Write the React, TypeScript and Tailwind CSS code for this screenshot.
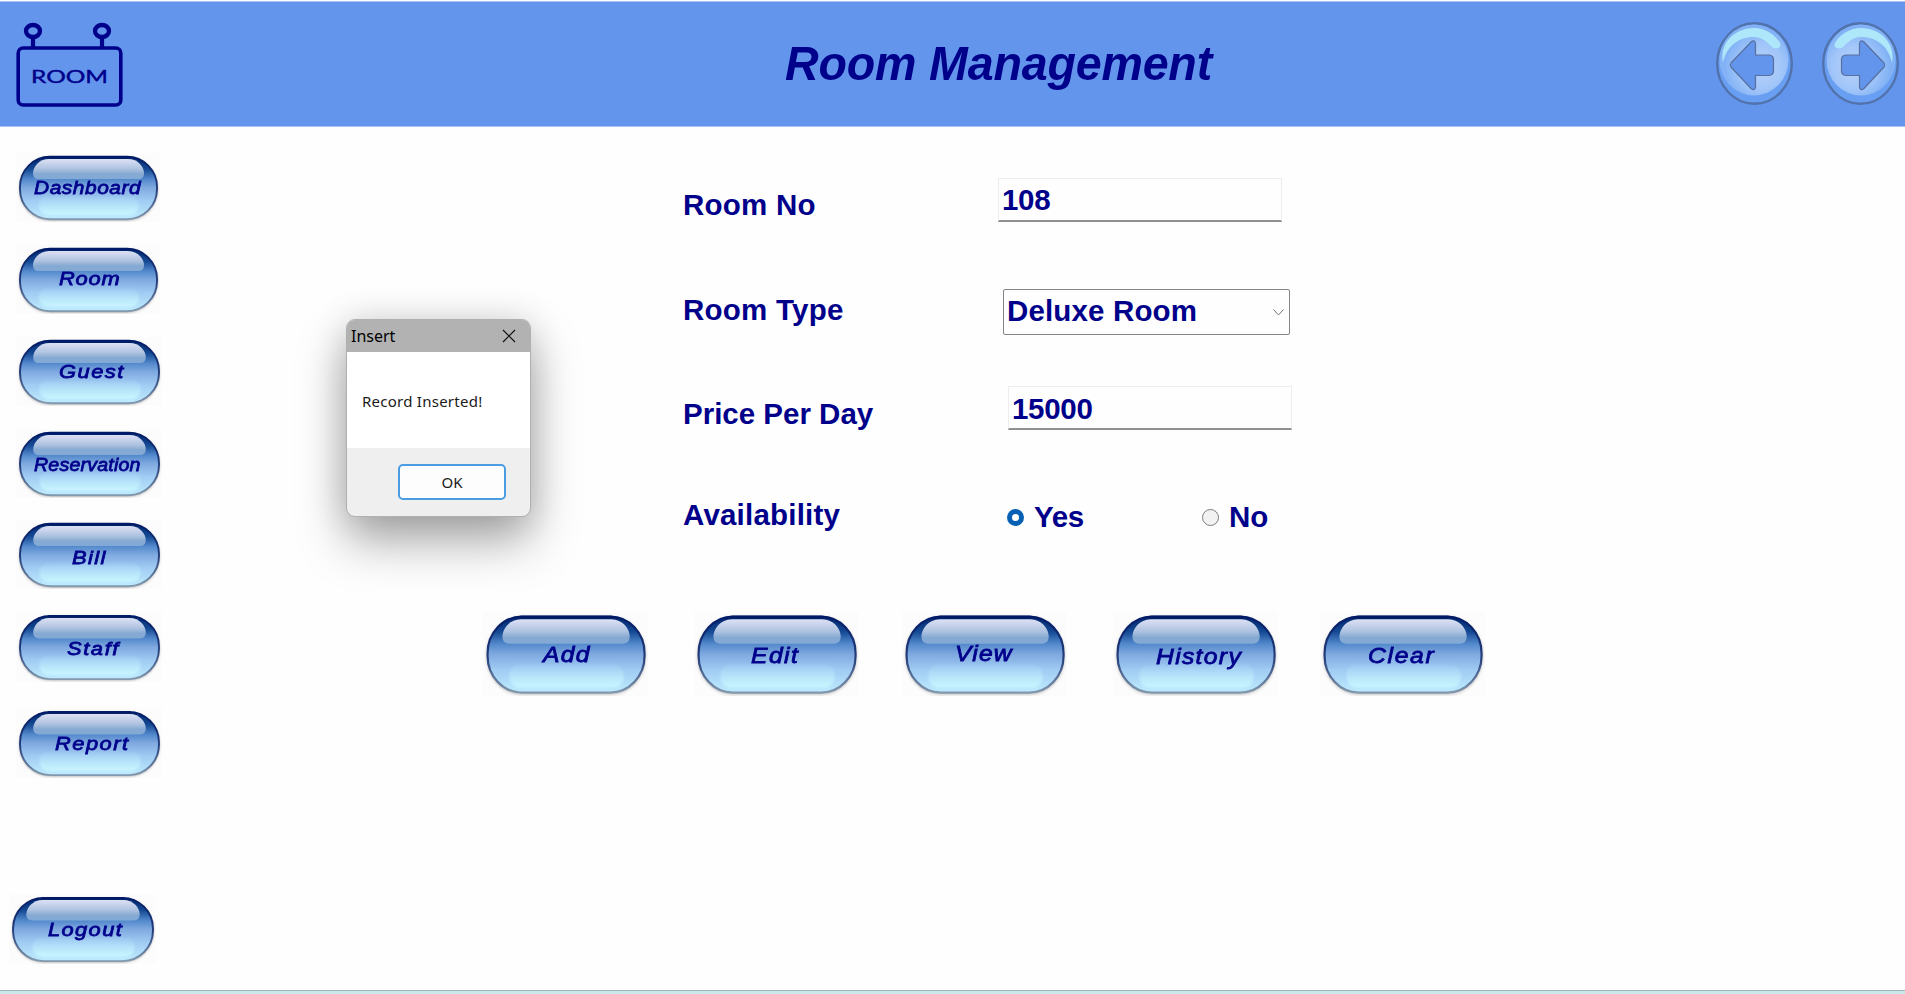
import React, { useId } from "react";

type PillItem = { label: string; box: string; text: string };

const navItems: PillItem[] = [
  { label: "Dashboard", box: "ml-[16px] w-[144px] h-[69px]", text: "ml-[18px] mt-[25px] scale-x-[1.1] tracking-[0.5px]" },
  { label: "Room", box: "ml-[16px] mt-[23px] w-[144px] h-[69px]", text: "ml-[43px] mt-[24px] scale-x-[1.15] tracking-[0.7px]" },
  { label: "Guest", box: "ml-[16px] mt-[23px] w-[146px] h-[69px]", text: "ml-[43px] mt-[25px] scale-x-[1.15] tracking-[1.3px]" },
  { label: "Reservation", box: "ml-[16px] mt-[23px] w-[146px] h-[69px]", text: "ml-[18px] mt-[26px] scale-x-[1.03] tracking-[0.2px]" },
  { label: "Bill", box: "ml-[16px] mt-[22px] w-[146px] h-[69px]", text: "ml-[56px] mt-[28px] scale-x-[1.15] tracking-[1.2px]" },
  { label: "Staff", box: "ml-[16px] mt-[23px] w-[146px] h-[70px]", text: "ml-[51px] mt-[27px] scale-x-[1.15] tracking-[1.4px]" },
  { label: "Report", box: "ml-[16px] mt-[26px] w-[146px] h-[70px]", text: "ml-[39px] mt-[26px] scale-x-[1.15] tracking-[1.3px]" },
  { label: "Logout", box: "ml-[9px] mt-[116px] w-[147px] h-[70px]", text: "ml-[39px] mt-[26px] scale-x-[1.15] tracking-[1.2px]" },
];

const actionItems: PillItem[] = [
  { label: "Add", box: "ml-[0.5px] w-[165px] h-[84px]", text: "ml-[60px] mt-[32px] scale-x-[1.12] tracking-[1.2px]" },
  { label: "Edit", box: "ml-[46.5px] w-[165px] h-[84px]", text: "ml-[57px] mt-[33px] scale-x-[1.12] tracking-[1.3px]" },
  { label: "View", box: "ml-[42.5px] w-[165px] h-[84px]", text: "ml-[53px] mt-[31px] scale-x-[1.12] tracking-[1.1px]" },
  { label: "History", box: "ml-[46px] w-[165px] h-[84px]", text: "ml-[43px] mt-[34px] scale-x-[1.12] tracking-[1.2px]" },
  { label: "Clear", box: "ml-[42.5px] w-[165px] h-[84px]", text: "ml-[48px] mt-[33px] scale-x-[1.12] tracking-[1.5px]" },
];

function PillArt() {
  const id = useId().replace(/[^a-zA-Z0-9]/g, "");
  return (
    <svg className="col-start-1 row-start-1 h-full w-full" viewBox="0 0 144 69" preserveAspectRatio="none" aria-hidden="true">
      <defs>
        <linearGradient id={`${id}b`} x1="0" y1="0" x2="0" y2="1">
          <stop offset="0" stopColor="#00246b" />
          <stop offset="0.2" stopColor="#154a94" />
          <stop offset="0.36" stopColor="#5389cc" />
          <stop offset="0.5" stopColor="#80aae0" />
          <stop offset="0.7" stopColor="#a0cbf3" />
          <stop offset="1" stopColor="#bfecfe" />
        </linearGradient>
        <linearGradient id={`${id}s`} x1="0" y1="0" x2="0" y2="1">
          <stop offset="0" stopColor="#001a66" />
          <stop offset="0.55" stopColor="#26407c" />
          <stop offset="1" stopColor="#8299ae" />
        </linearGradient>
        <linearGradient id={`${id}h`} x1="0" y1="0" x2="0" y2="1">
          <stop offset="0" stopColor="#dde1f5" />
          <stop offset="0.5" stopColor="#adc2e0" />
          <stop offset="0.75" stopColor="#85a9d2" />
          <stop offset="1" stopColor="#82a9d6" />
        </linearGradient>
        <linearGradient id={`${id}g`} x1="0" y1="0" x2="0" y2="1">
          <stop offset="0" stopColor="#b4e0fa" stopOpacity="0.15" />
          <stop offset="0.5" stopColor="#c0effc" stopOpacity="0.55" />
          <stop offset="1" stopColor="#caf7ff" stopOpacity="0.95" />
        </linearGradient>
        <filter id={`${id}f`} x="-10%" y="-10%" width="120%" height="130%">
          <feGaussianBlur stdDeviation="1.3" />
        </filter>
        <filter id={`${id}k`} x="-10%" y="-20%" width="120%" height="140%">
          <feGaussianBlur stdDeviation="0.9" />
        </filter>
      </defs>
      <rect width="144" height="69" fill="#fcfcfc" />
      <rect x="3" y="4" width="139" height="64" rx="31" fill="#b5b0b0" opacity="0.75" filter={`url(#${id}f)`} />
      <rect x="4" y="3.8" width="137" height="62.4" rx="30" fill={`url(#${id}b)`} stroke={`url(#${id}s)`} strokeWidth="1.9" />
      <path d="M32 4.2H113" stroke="#001a66" strokeWidth="2.4" />
      <path d="M33 6H112C122 6 128 14 128 20C128 24 126 26 122 26H23C19 26 17 24 17 20C17 14 23 6 33 6Z" fill={`url(#${id}h)`} />
      <rect x="23" y="43" width="100" height="19" rx="9" fill={`url(#${id}g)`} filter={`url(#${id}k)`} />
    </svg>
  );
}

function PillButton({ item, size }: { item: PillItem; size: string }) {
  return (
    <button className={`grid shrink-0 grid-cols-1 grid-rows-1 overflow-hidden text-left ${item.box}`}>
      <PillArt />
      <span
        className={`z-10 col-start-1 row-start-1 block origin-left self-start justify-self-start whitespace-nowrap font-normal italic leading-none [-webkit-text-stroke:0.8px_#00008b] ${size} ${item.text}`}
      >
        {item.label}
      </span>
    </button>
  );
}

function RoomSign() {
  return (
    <svg className="ml-[16px] mt-[19px] h-[86px] w-[108px]" viewBox="0 0 108 86" fill="none" stroke="#00008b" aria-hidden="true">
      <ellipse cx="17" cy="10" rx="7" ry="6" strokeWidth="4.3" />
      <ellipse cx="86" cy="10" rx="7" ry="6" strokeWidth="4.3" />
      <path d="M17 16V26M86 16V26" strokeWidth="4.2" />
      <rect x="2.2" y="27" width="102.6" height="57" rx="5" strokeWidth="3.6" />
      <text x="15" y="61.500" textLength="77" lengthAdjust="spacingAndGlyphs" fill="#00008b" stroke="#00008b" strokeWidth="0.4" fontFamily="Lato, sans-serif" fontSize="17.5" fontWeight="400">
        ROOM
      </text>
    </svg>
  );
}

function ArrowOrb({ flipped = false }: { flipped?: boolean }) {
  const id = useId().replace(/[^a-zA-Z0-9]/g, "");
  return (
    <svg className={`h-[84px] w-[78px] ${flipped ? "-scale-x-100" : ""}`} viewBox="0 0 78 84" aria-hidden="true">
      <defs>
        <radialGradient id={id} cx="0.6" cy="0.6" r="0.52">
          <stop offset="0" stopColor="#b8d2fb" />
          <stop offset="0.6" stopColor="#a2c6f9" />
          <stop offset="1" stopColor="#82b2f5" />
        </radialGradient>
      </defs>
      <ellipse cx="39.500" cy="42.500" rx="37.300" ry="40.300" fill="#699ff2" stroke="#5272ac" strokeWidth="2.4" />
      <ellipse cx="39" cy="39" rx="34.500" ry="35.500" fill={`url(#${id})`} />
      <path d="M8 42C4 22 20 7 39 7C51 7 60 14 65 22C67 27 61 29 57 26C51 20 46 16 39 16C23 16 11 26 8 42Z" fill="#aee6fa" />
      <path d="M16 42L36 21Q40 18 40.500 23V34H54Q58.500 34.500 58.500 38.500V50Q58.500 54 54 54.500H40.500V66Q40 70.500 36 67.500L16 46Q14.500 44 16 42Z" fill="#6495ed" stroke="#56709f" strokeWidth="1.2" />
    </svg>
  );
}

function MessageDialog() {
  return (
    <div
      role="dialog"
      className="absolute left-[346px] top-[319px] flex h-[198px] w-[185px] flex-col overflow-hidden rounded-[9px] border border-[#b0b0b0] bg-[#efefef] font-['Noto_Sans',sans-serif] text-black shadow-[0_24px_48px_rgba(0,0,0,0.34),0_0_36px_rgba(0,0,0,0.12)]"
    >
      <div className="flex h-[32px] shrink-0 items-center justify-between bg-[#b2b2b2] pl-[4px] pr-[14px]">
        <span className="text-[16px] leading-none">Insert</span>
        <svg className="h-[14px] w-[14px]" viewBox="0 0 14 14" stroke="#111" strokeWidth="1.2" aria-hidden="true">
          <path d="M1 1L13 13M13 1L1 13" />
        </svg>
      </div>
      <div className="flex h-[96px] shrink-0 items-center bg-white pl-[15px] pt-[2px] text-[15px] leading-none tracking-[0.25px] text-[#1a1a1a]">Record Inserted!</div>
      <div className="flex justify-end pr-[24px] pt-[16px]">
        <button className="h-[36px] w-[108px] rounded-[5px] border-2 border-[#4a9de0] bg-[#fdfdfd] text-[15px] leading-none text-[#1a1a1a]">OK</button>
      </div>
    </div>
  );
}

export default function App() {
  return (
    <div className="relative flex h-[994px] w-[1905px] flex-col overflow-hidden bg-[#fefefe] font-['Liberation_Sans',Arial,sans-serif] text-[#00008b]">
      <header className="mt-[1px] flex h-[126px] shrink-0 border-y border-[#a9c5f4] bg-[#6495ed]">
        <RoomSign />
        <h1 className="ml-[660.5px] mt-[38px] origin-left scale-x-[0.971] whitespace-nowrap text-[48px] font-bold italic leading-none tracking-[-0.2px]">Room Management</h1>
        <div className="ml-auto mr-[5px] mt-[19px] flex gap-[29px]">
          <ArrowOrb />
          <ArrowOrb flipped />
        </div>
      </header>

      <div className="flex h-[863px] shrink-0">
        <nav className="flex w-[482px] shrink-0 flex-col pt-[26px]">
          {navItems.map((item) => (
            <PillButton key={item.label} item={item} size="text-[19px]" />
          ))}
        </nav>

        <main className="flex flex-col text-[29.5px] font-bold leading-none">
          <div className="ml-[201px] flex h-[110px] items-start">
            <label className="mt-[63px] w-[315px] tracking-[0.25px]">Room No</label>
            <div className="mt-[51px] h-[44px] w-[284px] border border-b-2 border-[#ededed] border-b-[#8f8f8f] pl-[3px] pt-[6px] tracking-[-0.3px]">108</div>
          </div>
          <div className="ml-[201px] flex h-[105px] items-start">
            <label className="mt-[58px] w-[320px] tracking-[0.25px]">Room Type</label>
            <div className="mt-[52px] flex h-[46px] w-[287px] items-start justify-between rounded-[2px] border border-[#858585] pl-[3px] pr-[5px] pt-[6px] tracking-[0.15px]">
              Deluxe Room
              <svg className="mt-[13px] h-[7px] w-[11px]" viewBox="0 0 11 7" fill="none" stroke="#777" aria-hidden="true">
                <path d="M0.500 0.500L5.500 6L10.500 0.500" />
              </svg>
            </div>
          </div>
          <div className="ml-[201px] flex h-[100px] items-start">
            <label className="mt-[57px] w-[325px]">Price Per Day</label>
            <div className="mt-[44px] h-[44px] w-[284px] border border-b-2 border-[#ededed] border-b-[#8f8f8f] pl-[3px] pt-[7px] tracking-[-0.3px]">15000</div>
          </div>
          <div className="ml-[201px] flex h-[170px] items-start">
            <label className="mt-[58px] w-[324px] tracking-[0.2px]">Availability</label>
            <div className="mt-[60px] flex w-[195px] items-start">
              <span className="mt-[7px] h-[17px] w-[17px] rounded-full border-[5px] border-[#0860b5] bg-white" />
              <span className="ml-[10px] tracking-[-0.3px]">Yes</span>
            </div>
            <div className="mt-[60px] flex items-start">
              <span className="mt-[7px] h-[17px] w-[17px] rounded-full border border-[#7d7d7d] bg-[#f2f2f2]" />
              <span className="ml-[10px]">No</span>
            </div>
          </div>
          <div className="flex">
            {actionItems.map((item) => (
              <PillButton key={item.label} item={item} size="text-[22px]" />
            ))}
          </div>
        </main>
      </div>

      <footer className="h-[4px] shrink-0 border-t border-[#9fb4c0] bg-[#cce7ec]" />
      <MessageDialog />
    </div>
  );
}
